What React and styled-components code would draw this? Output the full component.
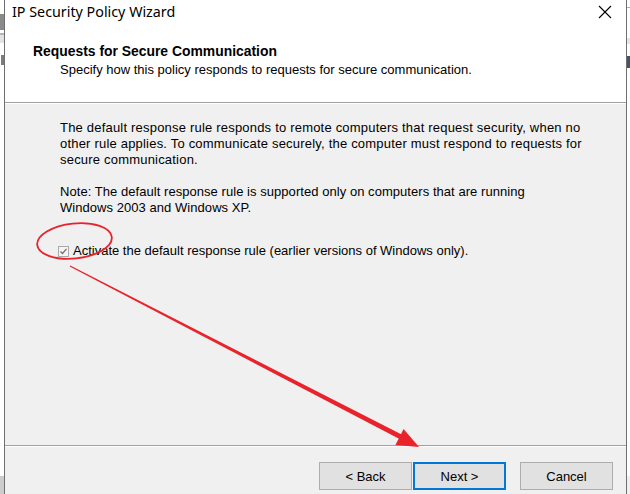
import React, { useState } from "react";
import styled, { createGlobalStyle } from "styled-components";

const Global = createGlobalStyle`
  html, body { margin: 0; padding: 0; background: #ffffff; }
  body { width: 630px; height: 494px; overflow: hidden; }
`;

const Screen = styled.div`
  position: relative;
  display: flex;
  width: 630px;
  height: 494px;
  overflow: hidden;
  background: #ffffff;
`;

// strips of the window behind the dialog
const Behind = styled.div`
  width: ${p => p.w}px;
  display: flex;
  flex-direction: column;
  background: #ffffff;
  flex-shrink: 0;
`;

const Bit = styled.div`
  height: ${p => p.h}px;
  background: ${p => p.c || "transparent"};
  margin-left: ${p => p.ml || 0}px;
  flex-shrink: 0;
`;

const Dialog = styled.div`
  flex: 1;
  display: flex;
  flex-direction: column;
  border-left: 1px solid #6f6f6f;
  border-right: 1px solid #6f6f6f;
  background: #f0f0f0;
`;

const TitleBar = styled.div`
  height: 31px;
  display: flex;
  align-items: flex-start;
  justify-content: space-between;
  background: #ffffff;
  padding: 2px 14px 0 7px;
  box-sizing: border-box;
`;

const Title = styled.div`
  font-family: "Noto Sans", "Open Sans", sans-serif;
  font-size: 14.3px;
  color: #000;
  line-height: 20px;
`;

const Header = styled.div`
  height: 72px;
  background: #ffffff;
  padding: 12px 0 0 28px;
  box-sizing: border-box;
  font-family: "Liberation Sans", Arial, sans-serif;
  border-bottom: 1px solid #a0a0a0;
`;

const HeadTitle = styled.div`
  font-weight: bold;
  font-size: 13.9px;
  line-height: 16px;
  color: #000;
`;

const HeadSub = styled.div`
  font-size: 13px;
  line-height: 16px;
  margin: 3px 0 0 27px;
  color: #000;
`;

const Rule = styled.div`
  height: 1px;
  background: #ffffff;
`;

const Body = styled.div`
  flex: 1;
  padding: 16px 0 0 55px;
  font-family: "Liberation Sans", Arial, sans-serif;
  font-size: 13px;
  line-height: 16px;
  color: #000;
`;

const Para = styled.p`
  margin: 0 0 16px 0;
  letter-spacing: ${p => p.ls || 0}px;
`;

const CheckRow = styled.label`
  display: flex;
  align-items: center;
  gap: 4px;
  margin: 27px 0 0 -2px;
`;

const Box = styled.span`
  width: 11px;
  height: 11px;
  box-sizing: border-box;
  border: 1px solid #a9a9a9;
  background: #f4f4f4;
  display: inline-flex;
  align-items: center;
  justify-content: center;
`;

const Footer = styled.div`
  height: 49px;
  border-top: 1px solid #a0a0a0;
  box-shadow: inset 0 1px 0 #ffffff;
  display: flex;
  justify-content: flex-end;
  align-items: flex-start;
  padding: 16px 13px 0 0;
  box-sizing: border-box;
  flex-shrink: 0;
`;

const Button = styled.button`
  width: 93px;
  height: 28px;
  margin-left: ${p => p.gap || 0}px;
  background: #e1e1e1;
  border: 1px solid ${p => (p.primary ? "#0078d7" : "#adadad")};
  box-shadow: ${p => (p.primary ? "inset 0 0 0 1px #0078d7" : "none")};
  font-family: "Liberation Sans", Arial, sans-serif;
  font-size: 13px;
  color: #000;
  padding: 0;
`;

const Overlay = styled.svg`
  position: absolute;
  left: 0;
  top: 0;
  pointer-events: none;
`;

export default function App() {
  const [checked, setChecked] = useState(true);

  return (
    <Screen>
      <Global />
      <Behind w={4}>
        <Bit h={14} />
        <Bit h={16} c="#8a8a8a" />
        <Bit h={3} />
        <Bit h={2} c="#b5b5b5" />
        <Bit h={8} c="#e3e3e3" />
        <Bit h={12} />
        <Bit h={10} c="#7c7c7c" ml={1} />
        <Bit h={411} />
        <Bit h={18} c="#cdcdcd" />
      </Behind>

      <Dialog>
        <TitleBar>
          <Title>IP Security Policy Wizard</Title>
          <svg width="14" height="14" viewBox="0 0 14 14" style={{ marginTop: 3 }}>
            <path d="M1 1 L13 13 M13 1 L1 13" stroke="#000" strokeWidth="1.1" />
          </svg>
        </TitleBar>
        <Header>
          <HeadTitle>Requests for Secure Communication</HeadTitle>
          <HeadSub>Specify how this policy responds to requests for secure communication.</HeadSub>
        </Header>
        <Rule />
        <Body>
          <Para ls={0.2}>
            The default response rule responds to remote computers that request security, when no
            <br />
            other rule applies. To communicate securely, the computer must respond to requests for
            <br />
            secure communication.
          </Para>
          <Para ls={0.05}>
            Note: The default response rule is supported only on computers that are running
            <br />
            Windows 2003 and Windows XP.
          </Para>
          <CheckRow onClick={() => setChecked(!checked)}>
            <Box>
              {checked && (
                <svg width="9" height="9" viewBox="0 0 9 9">
                  <path d="M1.5 4.5 L3.5 6.5 L7.5 1.8" stroke="#6d6d6d" strokeWidth="1.2" fill="none" />
                </svg>
              )}
            </Box>
            Activate the default response rule (earlier versions of Windows only).
          </CheckRow>
        </Body>
        <Footer>
          <Button>&lt; Back</Button>
          <Button primary gap={1}>Next &gt;</Button>
          <Button gap={14}>Cancel</Button>
        </Footer>
      </Dialog>

      <Behind w={3}>
        <Bit h={7} />
        <Bit h={1} c="#b0b0b0" />
        <Bit h={30} />
        <Bit h={6} c="#e6e6e6" />
        <Bit h={12} />
        <Bit h={12} c="#44546a" />
        <Bit h={408} />
        <Bit h={18} c="#f0f0f0" />
      </Behind>

      <Overlay width="630" height="494" viewBox="0 0 630 494">
        <ellipse cx="74.5" cy="241" rx="37.5" ry="17.5" transform="rotate(-6 74.5 241)" fill="none" stroke="#e8232b" strokeWidth="1.8" />
        <polygon points="70.3,265.4 404.1,435.8 401.9,440.2 69.7,266.6" fill="#e8232b" />
        <polygon points="403.6,428.9 419,447 395.4,444.9" fill="#e8232b" />
      </Overlay>
    </Screen>
  );
}
